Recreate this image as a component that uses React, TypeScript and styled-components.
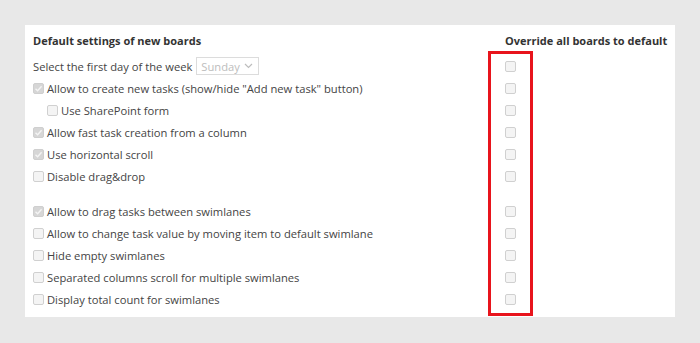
import * as React from 'react';
import styled, { createGlobalStyle } from 'styled-components';

const GlobalStyle = createGlobalStyle`
  html, body {
    margin: 0;
    padding: 0;
    background: #e8e8e8;
  }
  body {
    font-family: "Open Sans", "Noto Sans", sans-serif;
    color: #444;
  }
`;

interface Setting {
  label: string;
  checked?: boolean;
  indent?: boolean;
}

const firstGroup: Setting[] = [
  { label: 'Allow to create new tasks (show/hide "Add new task" button)', checked: true },
  { label: 'Use SharePoint form', indent: true },
  { label: 'Allow fast task creation from a column', checked: true },
  { label: 'Use horizontal scroll', checked: true },
  { label: 'Disable drag&drop' },
];

const secondGroup: Setting[] = [
  { label: 'Allow to drag tasks between swimlanes', checked: true },
  { label: 'Allow to change task value by moving item to default swimlane' },
  { label: 'Hide empty swimlanes' },
  { label: 'Separated columns scroll for multiple swimlanes' },
  { label: 'Display total count for swimlanes' },
];

const Page = styled.div`
  padding: 25px;
  height: 343px;
  box-sizing: border-box;
`;

const Panel = styled.div`
  position: relative;
  width: 650px;
  box-sizing: border-box;
  background: #fff;
  padding: 0 8px 7px 8px;
`;

const HeaderRow = styled.div`
  display: flex;
  align-items: center;
  height: 30px;
  font-weight: 700;
  font-size: 11px;
  color: #333;
`;

const Row = styled.div`
  display: flex;
  align-items: center;
  height: 22px;
  font-size: 11.2px;
`;

const Spacer = styled.div`
  height: 13px;
`;

const LeftCell = styled.div<{ $indent?: boolean }>`
  flex: 1;
  display: flex;
  align-items: center;
  gap: 3px;
  padding-left: ${p => (p.$indent ? '14px' : '0')};
  white-space: nowrap;
`;

const RightCell = styled.div`
  width: 162px;
  display: flex;
  align-items: center;
  white-space: nowrap;
`;

const Box = styled.span<{ $checked?: boolean }>`
  width: 11px;
  height: 11px;
  box-sizing: border-box;
  border: 1px solid ${p => (p.$checked ? '#cfcfcf' : '#d0d0d0')};
  border-radius: 2px;
  background: ${p => (p.$checked ? '#d6d6d6' : '#f4f4f4')};
  flex-shrink: 0;
  display: inline-flex;
  align-items: center;
  justify-content: center;
`;

const Select = styled.span`
  display: inline-flex;
  align-items: center;
  justify-content: space-between;
  width: 63px;
  height: 18px;
  box-sizing: border-box;
  border: 1px solid #dcdcdc;
  padding: 0 5px 0 4px;
  margin-left: 1px;
  color: #bdbdbd;
  font-size: 11.2px;
`;

const Highlight = styled.div`
  position: absolute;
  left: 463px;
  top: 26px;
  width: 45px;
  height: 265px;
  box-sizing: border-box;
  border: 3px solid #e8141c;
  pointer-events: none;
`;

function Check({ checked }: { checked?: boolean }) {
  return (
    <Box $checked={checked}>
      {checked && (
        <svg width="9" height="9" viewBox="0 0 9 9">
          <path d="M1.5 4.8 L3.6 6.8 L7.6 2.2" fill="none" stroke="#f4f4f4" strokeWidth="1.4" />
        </svg>
      )}
    </Box>
  );
}

function SettingRow({ s }: { s: Setting }) {
  return (
    <Row>
      <LeftCell $indent={s.indent}>
        <Check checked={s.checked} />
        <span>{s.label}</span>
      </LeftCell>
      <RightCell>
        <Check />
      </RightCell>
    </Row>
  );
}

export default function App() {
  return (
    <>
      <GlobalStyle />
      <Page>
        <Panel>
          <HeaderRow>
            <LeftCell>Default settings of new boards</LeftCell>
            <RightCell>Override all boards to default</RightCell>
          </HeaderRow>
          <Row>
            <LeftCell>
              <span>Select the first day of the week</span>
              <Select>
                <span>Sunday</span>
                <svg width="9" height="6" viewBox="0 0 9 6">
                  <path d="M1 1 L4.5 4.5 L8 1" fill="none" stroke="#bdbdbd" strokeWidth="1.2" />
                </svg>
              </Select>
            </LeftCell>
            <RightCell>
              <Check />
            </RightCell>
          </Row>
          {firstGroup.map(s => (
            <SettingRow key={s.label} s={s} />
          ))}
          <Spacer />
          {secondGroup.map(s => (
            <SettingRow key={s.label} s={s} />
          ))}
          <Highlight />
        </Panel>
      </Page>
    </>
  );
}
